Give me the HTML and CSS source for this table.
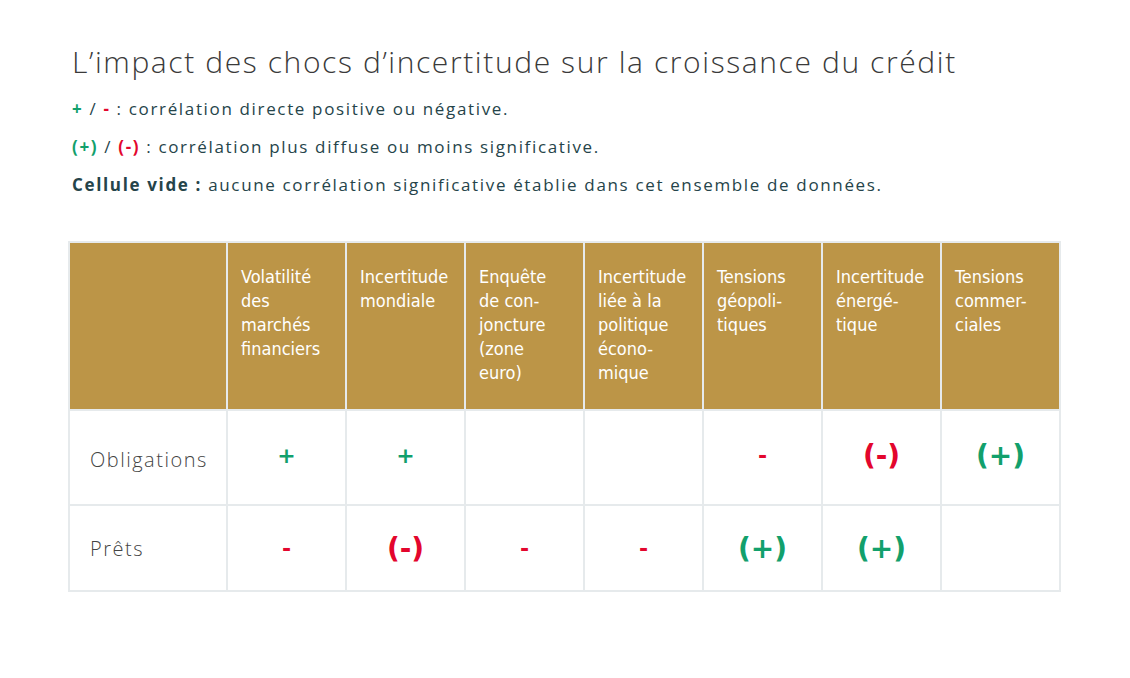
FILE: index.html
```html
<!DOCTYPE html>
<html lang="fr">
<head>
<meta charset="utf-8">
<link rel="stylesheet" href="styles.css">
</head>
<body>
<div class="page">
  <h1 class="title">L’impact des chocs d’incertitude sur la croissance du crédit</h1>
  <p class="legend"><span class="pos b">+</span> / <span class="neg b">-</span> : corrélation directe positive ou négative.</p>
  <p class="legend"><span class="pos b">(+)</span> / <span class="neg b">(-)</span> : corrélation plus diffuse ou moins significative.</p>
  <p class="legend"><span class="b">Cellule vide :</span> aucune corrélation significative établie dans cet ensemble de données.</p>

  <table class="grid">
    <colgroup>
      <col class="c-first">
      <col class="c"><col class="c"><col class="c"><col class="c"><col class="c"><col class="c"><col class="c">
    </colgroup>
    <thead>
      <tr>
        <th></th>
        <th>Volatilité<br>des<br>marchés<br>financiers</th>
        <th>Incertitude<br>mondiale</th>
        <th>Enquête<br>de con-<br>joncture<br>(zone<br>euro)</th>
        <th>Incertitude<br>liée à la<br>politique<br>écono-<br>mique</th>
        <th>Tensions<br>géopoli-<br>tiques</th>
        <th>Incertitude<br>énergé-<br>tique</th>
        <th>Tensions<br>commer-<br>ciales</th>
      </tr>
    </thead>
    <tbody>
      <tr class="r1">
        <td class="label">Obligations</td>
        <td class="pos sym">+</td>
        <td class="pos sym">+</td>
        <td></td>
        <td></td>
        <td class="neg sym">-</td>
        <td class="neg sym paren">(-)</td>
        <td class="pos sym paren">(+)</td>
      </tr>
      <tr class="r2">
        <td class="label">Prêts</td>
        <td class="neg sym">-</td>
        <td class="neg sym paren">(-)</td>
        <td class="neg sym">-</td>
        <td class="neg sym">-</td>
        <td class="pos sym paren">(+)</td>
        <td class="pos sym paren">(+)</td>
        <td></td>
      </tr>
    </tbody>
  </table>
</div>
</body>
</html>
```

FILE: styles.css
```css
html, body {
  margin: 0;
  padding: 0;
  background: #ffffff;
}

.page {
  padding: 42px 0 0 72px;
  font-family: "Open Sans", "DejaVu Sans", sans-serif;
}

.title {
  margin: 0 0 16px 0;
  font-weight: 300;
  font-size: 30px;
  line-height: 40px;
  color: #3a3a3a;
  letter-spacing: 1.6px;
}

.legend {
  margin: 0 0 16px 0;
  font-size: 17px;
  line-height: 22px;
  color: #25444a;
  letter-spacing: 1.65px;
}

.legend .b {
  font-weight: 700;
}

.pos { color: #12a06c; }
.neg { color: #e3062d; }

.grid {
  margin: 45px 0 0 -4px;
  border-collapse: collapse;
  table-layout: fixed;
  width: 989px;
  border: 2px solid #e6eaec;
}

.c-first { width: 158px; }
.c { width: 119px; }

.grid th {
  background: #bc9547;
  color: #ffffff;
  font-family: "DejaVu Sans Condensed", "DejaVu Sans", sans-serif;
  font-weight: 400;
  font-size: 18px;
  line-height: 24px;
  text-align: left;
  vertical-align: top;
  padding: 22px 4px 0 13px;
  height: 144px;
  border: 2px solid #e6eaec;
  border-bottom: none;
  white-space: nowrap;
}

.grid td {
  border: 2px solid #e6eaec;
  text-align: center;
  vertical-align: middle;
  padding: 0;
}

.r1 td { height: 89px; }
.r2 td { height: 84px; }

.grid td.label {
  text-align: left;
  padding-left: 20px;
  font-size: 20px;
  font-weight: 300;
  color: #444444;
  letter-spacing: 1.5px;
}

.r1 td.label { padding-top: 4px; }

.sym {
  font-family: "DejaVu Sans", sans-serif;
  font-weight: 700;
  font-size: 22px;
}

.r1 .sym { padding-bottom: 4px; }

.sym.paren {
  font-size: 28px;
}
```
